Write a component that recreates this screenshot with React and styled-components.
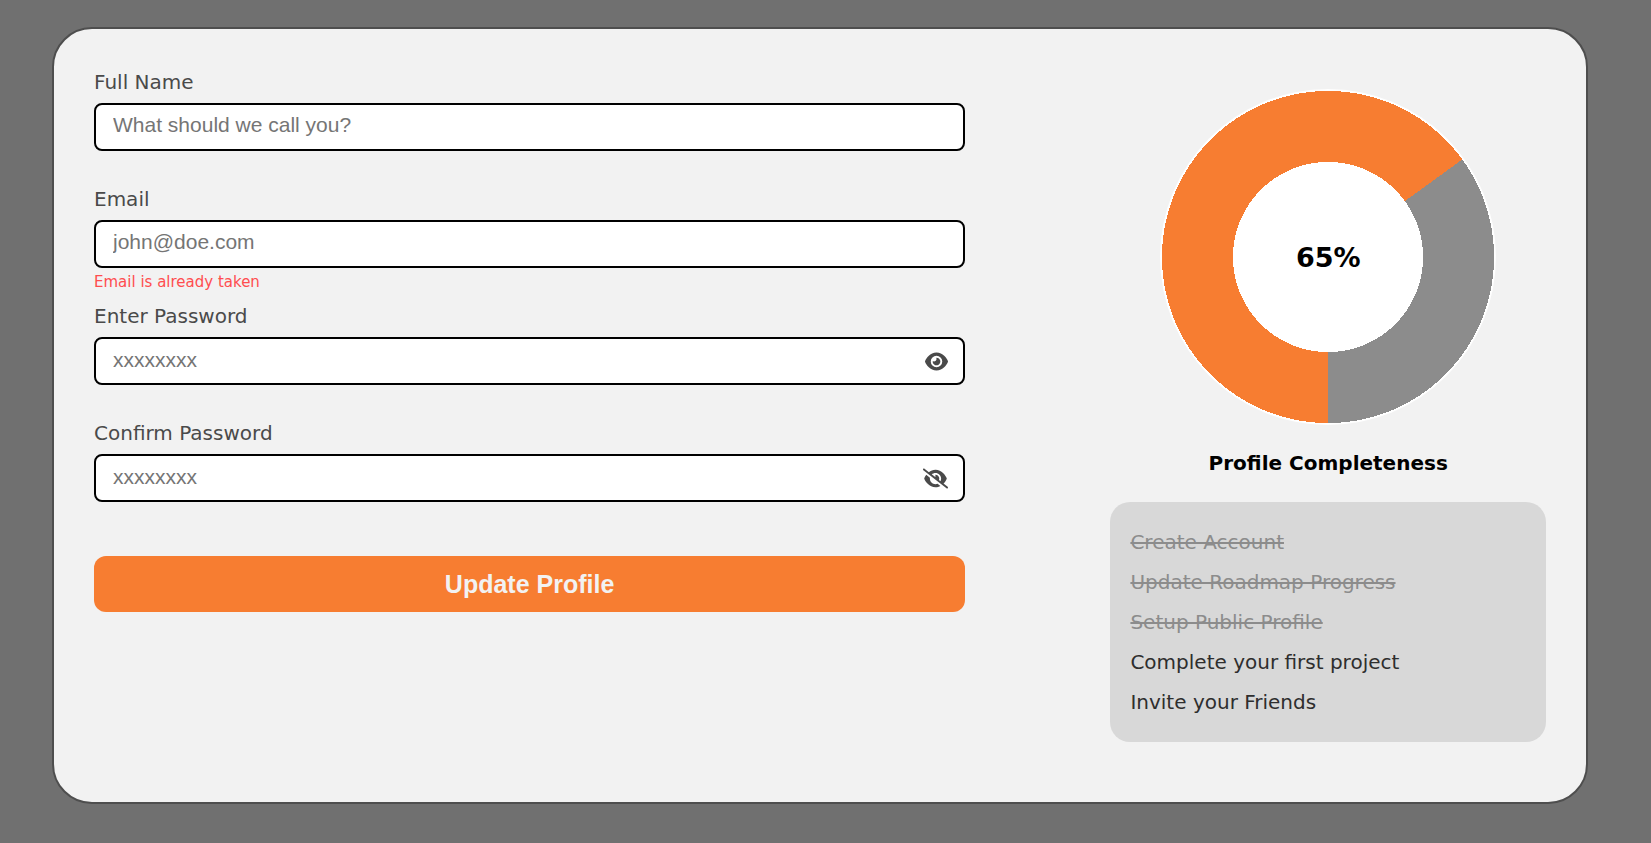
import React from "react";
import styled, { createGlobalStyle } from "styled-components";
import { FaEye, FaEyeSlash } from "react-icons/fa6";

const GlobalStyle = createGlobalStyle`
  *, *::before, *::after { box-sizing: border-box; }
  body {
    margin: 0;
    background: #707070;
    font-family: Verdana, "DejaVu Sans", sans-serif;
    font-size: 20px;
  }
`;

const Card = styled.main`
  display: flex;
  justify-content: space-between;
  margin: 27px 63px 39px 52px;
  padding: 40px;
  border: 2px solid #4e4e4e;
  border-radius: 40px;
  background: #f2f2f2;
`;

const Form = styled.form`
  width: 60%;
`;

const Field = styled.div`
  display: flex;
  flex-direction: column;
  height: 117px;
`;

const Label = styled.label`
  margin-bottom: 8px;
  line-height: 26px;
  color: #4a4a4a;
`;

const InputBox = styled.div`
  display: flex;
  align-items: center;
  height: 48px;
  padding-right: 15px;
  border: 2px solid #000;
  border-radius: 8px;
  background: #fff;
`;

const Input = styled.input`
  flex: 1;
  min-width: 0;
  padding: 0 0 ${(p) => (p.type === "password" ? 2 : 4)}px 17px;
  border: 0;
  outline: 0;
  background: transparent;
  font-family: Arial, "Liberation Sans", sans-serif;
  font-size: 21px;
  line-height: 24px;
  color: #222;

  &::placeholder { color: #757575; opacity: 1; }
`;

const EyeButton = styled.button`
  display: flex;
  padding: 0;
  border: 0;
  background: transparent;
  color: #4a4a4a;
  cursor: pointer;
`;

const ErrorText = styled.span`
  margin-top: 4px;
  font-size: 15px;
  line-height: 20px;
  color: #ff4d4f;
`;

const SubmitButton = styled.button`
  display: block;
  width: 100%;
  height: 56px;
  margin-top: 19px;
  border: 0;
  border-radius: 12px;
  background: #f77d31;
  color: #f2f2f2;
  font-family: Arial, "Liberation Sans", sans-serif;
  font-size: 25px;
  font-weight: bold;
  cursor: pointer;
`;

const Side = styled.aside`
  display: flex;
  flex-direction: column;
  align-items: center;
  width: 30%;
  padding: 20px 0;
`;

const Donut = styled.div`
  display: grid;
  place-items: center;
  width: 336px;
  height: 336px;
  border-radius: 50%;
  background:
    radial-gradient(circle, #fff 95px, transparent 95px 166px, #fff 166px),
    conic-gradient(from 180deg, #f77d31 ${(p) => p.$percent}%, #8c8c8c 0);
  font-size: 27px;
  font-weight: bold;
  color: #000;
`;

const Title = styled.h2`
  margin: 25px 0;
  font-size: 20px;
  line-height: 27px;
  color: #000;
`;

const TaskList = styled.ul`
  width: 100%;
  margin: 0;
  padding: 20px;
  border-radius: 20px;
  background: #d8d8d8;
  list-style: none;
`;

const Task = styled.li`
  line-height: 40px;
  color: ${(p) => (p.$done ? "#8c8c8c" : "#2e2e2e")};
  text-decoration: ${(p) => (p.$done ? "line-through" : "none")};
`;

const fields = [
  { id: "name", label: "Full Name", type: "text", placeholder: "What should we call you?" },
  { id: "email", label: "Email", type: "email", placeholder: "john@doe.com", error: "Email is already taken" },
  { id: "password", label: "Enter Password", type: "password", placeholder: "xxxxxxxx", icon: <FaEye size={23} />, action: "Show password" },
  { id: "confirm", label: "Confirm Password", type: "password", placeholder: "xxxxxxxx", icon: <FaEyeSlash size={25} />, action: "Hide password" },
];

const tasks = [
  { text: "Create Account", done: true },
  { text: "Update Roadmap Progress", done: true },
  { text: "Setup Public Profile", done: true },
  { text: "Complete your first project", done: false },
  { text: "Invite your Friends", done: false },
];

export default function App() {
  return (
    <>
      <GlobalStyle />
      <Card>
        <Form onSubmit={(e) => e.preventDefault()}>
          {fields.map((f) => (
            <Field key={f.id}>
              <Label htmlFor={f.id}>{f.label}</Label>
              <InputBox>
                <Input id={f.id} type={f.type} placeholder={f.placeholder} />
                {f.icon && <EyeButton type="button" aria-label={f.action}>{f.icon}</EyeButton>}
              </InputBox>
              {f.error && <ErrorText role="alert">{f.error}</ErrorText>}
            </Field>
          ))}
          <SubmitButton type="submit">Update Profile</SubmitButton>
        </Form>
        <Side>
          <Donut $percent={65}>65%</Donut>
          <Title>Profile Completeness</Title>
          <TaskList>
            {tasks.map((t) => (
              <Task key={t.text} $done={t.done}>{t.text}</Task>
            ))}
          </TaskList>
        </Side>
      </Card>
    </>
  );
}
